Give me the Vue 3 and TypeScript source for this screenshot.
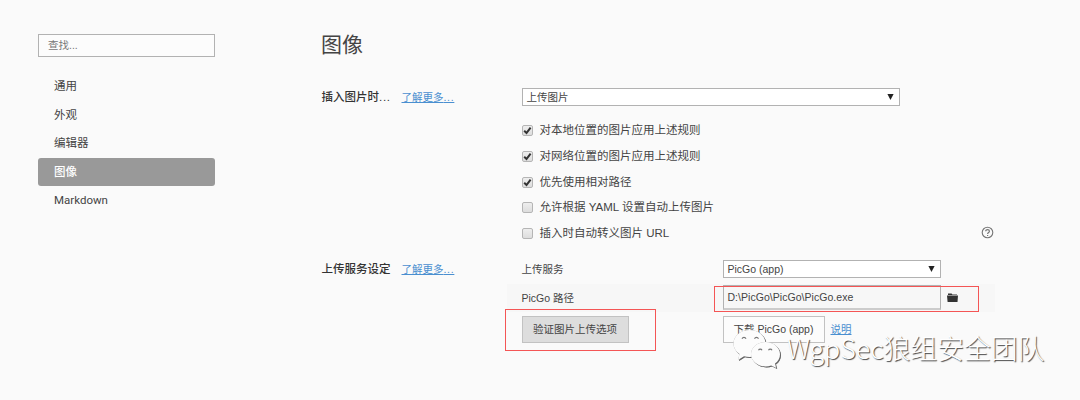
<script setup lang="ts">
import { ref } from 'vue'

const menu = ['通用', '外观', '编辑器', '图像', 'Markdown']
const active = ref('图像')
const rules = ref([
  { label: '对本地位置的图片应用上述规则', on: true },
  { label: '对网络位置的图片应用上述规则', on: true },
  { label: '优先使用相对路径', on: true },
  { label: '允许根据 YAML 设置自动上传图片', on: false },
  { label: '插入时自动转义图片 URL', on: false },
])
</script>

<template>
  <div class="page">
    <aside class="sidebar">
      <div class="search">查找...</div>
      <nav>
        <div v-for="m in menu" :key="m" class="item" :class="{ active: m === active }" @click="active = m">{{ m }}</div>
      </nav>
    </aside>
    <main class="content">
      <h1>图像</h1>
      <section class="section first">
        <div class="heading"><b>插入图片时<span class="dots">...</span></b><a>了解更多<span class="dots">...</span></a></div>
        <div class="body">
          <div class="select wide"><span>上传图片</span><svg width="7" height="6" viewBox="0 0 7 6"><path d="M.4 0h6.2L3.500 6z" fill="#222" /></svg></div>
          <div class="rules">
            <div v-for="r in rules" :key="r.label" class="rule" @click="r.on = !r.on">
              <span class="check"><svg v-if="r.on" width="9" height="9" viewBox="0 0 9 9"><path d="M1.200 4.800 3.500 7 7.600 1.600" fill="none" stroke="#333" stroke-width="2" /></svg></span>
              <span>{{ r.label }}</span>
            </div>
            <svg class="help" width="13" height="13" viewBox="0 0 13 13" fill="none" stroke="#777">
              <circle cx="6.5" cy="6.5" r="5.3" stroke-width="1.1" />
              <path d="M4.700 5.300c0-2.400 3.700-2.300 3.700-.1 0 1.300-1.800 1.400-1.800 2.800M6.600 8.900v1.100" stroke-width="1.200" />
            </svg>
          </div>
        </div>
      </section>
      <section class="section second">
        <div class="heading"><b>上传服务设定</b><a>了解更多<span class="dots">...</span></a></div>
        <div class="body service">
          <div class="row r1">
            <span class="name">上传服务</span>
            <div class="select"><span>PicGo (app)</span><svg width="7" height="6" viewBox="0 0 7 6"><path d="M.4 0h6.2L3.500 6z" fill="#222" /></svg></div>
          </div>
          <div class="row r2">
            <span class="name">PicGo 路径</span>
            <div class="path">D:\PicGo\PicGo\PicGo.exe</div>
            <svg class="folder" width="11" height="9" viewBox="0 0 11 9" fill="#333"><path d="M1 2V.4h3.600l.8 1H10V2zM0 2.500h11L10.500 9H.6z" /></svg>
            <i class="mark mark-path"></i>
          </div>
          <div class="row r3">
            <div class="name"><button class="verify">验证图片上传选项</button></div>
            <button class="download">下载 PicGo (app)</button>
            <a class="explain">说明</a>
            <i class="mark mark-verify"></i>
          </div>
        </div>
      </section>
    </main>
    <div class="watermark">
      <svg width="50" height="42" viewBox="0 0 50 42">
        <g class="bubble">
          <path d="M17.500 2C8.500 2 1.500 8 1.500 15.500c0 4.500 2.300 8 6 10.500L6 32l6-3.700c1.800.5 3.600.7 5.500.7 9 0 16-6 16-13.500S26.500 2 17.500 2z" />
          <path class="eye" d="M10 10.700a2.200 2.200 0 0 1 4 0M22.500 10.700a2.200 2.200 0 0 1 4 0" />
        </g>
        <g class="bubble">
          <path d="M33.500 14C25.500 14 19 19.500 19 26.200s6.500 12.200 14.500 12.200c2 0 4-.3 5.700-1l5 2.700-1.200-4.500c3.200-2.400 5-5.600 5-9.400C48 19.500 41.500 14 33.500 14z" />
          <path class="eye" d="M26.500 22.300a1.900 1.900 0 0 1 3.500 0M36.500 22.300a1.900 1.900 0 0 1 3.500 0" />
        </g>
      </svg>
      <span>WgpSec狼组安全团队</span>
    </div>
  </div>
</template>

<style>
body { background: #fafafa; }
</style>
<style scoped>
.page { box-sizing: border-box; position: relative; display: flex; width: 1080px; height: 400px; overflow: hidden; padding-left: 38px; background: #fafafa; color: #444; font: 11.5px/16px "Liberation Sans", "Noto Sans CJK SC", sans-serif; }
.page * { box-sizing: border-box; }
.sidebar { width: 177px; padding-top: 34px; }
.search { height: 23px; border: 1px solid #b2b2b2; background: #fcfcfc; padding-left: 9px; font-size: 10.5px; line-height: 20px; color: #777; }
nav { margin-top: 15px; }
.item { height: 28.5px; padding-left: 16px; line-height: 29px; border-radius: 3px; }
.item:last-child { font-family: Roboto, sans-serif; line-height: 28px; }
.item.active { height: 28px; margin-bottom: .5px; background: #999; color: #fff; font-weight: 500; line-height: 28px; }
.content { margin-left: 106px; width: 680px; }
h1 { margin: 29px 0 0; height: 59px; font-size: 21px; font-weight: 400; line-height: 32px; color: #444; }
.section { display: flex; margin-left: .5px; }
.heading { display: flex; width: 200px; line-height: 18px; }
.heading b { width: 80px; color: #333; font-weight: 500; white-space: nowrap; }
.dots { letter-spacing: .7px; }
a { color: #4a8fd0; font-size: 10.5px; text-decoration: underline; white-space: nowrap; }
.select { display: flex; align-items: center; justify-content: space-between; width: 218px; height: 18px; padding: 0 5px 0 4px; border: 1px solid #b2b2b2; background: #fff; font-size: 10.5px; }
.select.wide { width: 378.500px; }
.rules { position: relative; padding-top: 12px; }
.rule { display: flex; align-items: center; gap: 7px; height: 25.7px; line-height: 17px; }
.check { display: flex; width: 11px; height: 11px; border: 1px solid #b5b5b5; border-radius: 2px; background: linear-gradient(#eee, #ddd); }
.help { position: absolute; left: 459.500px; bottom: 7px; }
.second { margin-top: 13.500px; }
.service { width: 488px; margin-left: -15px; font-size: 10.5px; }
.row { position: relative; display: flex; align-items: center; padding-left: 15px; }
.name { width: 201px; }
.r1 { height: 18px; }
.r2 { height: 28px; margin-top: 6px; background: #f7f7f7; }
.r3 { height: 27px; margin-top: 4px; }
.path { width: 218px; height: 25px; border: 1px solid #b2b2b2; border-bottom-width: 2px; border-bottom-color: #ccc; padding-left: 4px; line-height: 23px; letter-spacing: .04px; }
.folder { margin-left: 6px; }
.mark { position: absolute; border: 1px solid #f45555; }
.mark-path { left: 207px; top: 2px; width: 265px; height: 26px; }
.mark-verify { left: -1.5px; top: -7px; width: 151px; height: 42px; }
button { height: 27px; padding: 0; border: 1px solid #c2c2c2; color: #444; font: inherit; }
.verify { display: block; width: 107px; background: #ddd; }
.download { width: 102px; background: #fcfcfc; }
.explain { margin-left: 6px; }
.watermark { position: absolute; left: 732px; top: 328px; display: flex; align-items: center; color: #fff; font: 300 26.8px/42px "Noto Sans CJK SC", sans-serif; text-shadow: 1px 1px 1px #444; white-space: nowrap; }
.watermark span { margin: -2px 0 0 5px; }
.bubble { fill: #fcfcfc; filter: drop-shadow(1px 1px .5px #666) drop-shadow(0 0 .4px #999); }
.eye { fill: none; stroke: #777; stroke-width: 1.1; }
</style>
